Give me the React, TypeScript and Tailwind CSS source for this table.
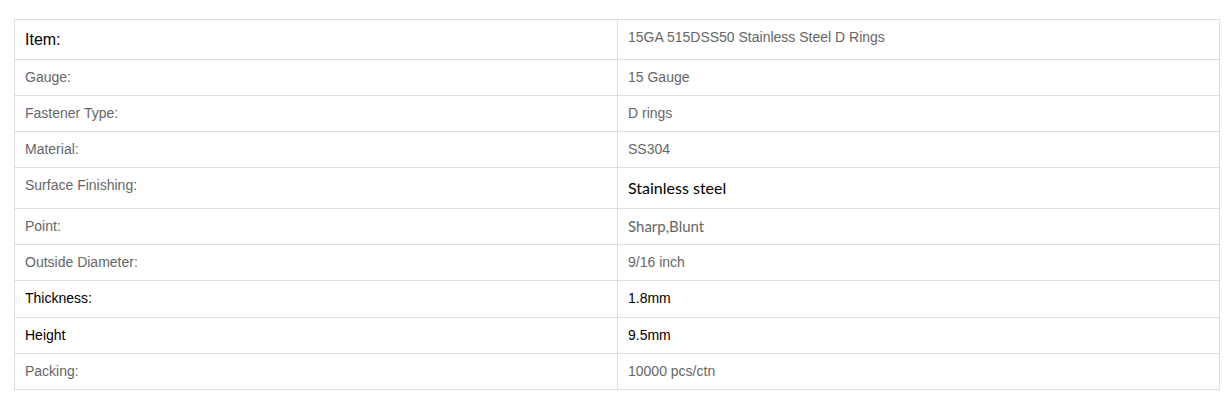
const rows: {
  label: string;
  value: string;
  h: string;
  labelCls?: string;
  valueCls?: string;
}[] = [
  { label: 'Item:', value: '15GA 515DSS50 Stainless Steel D Rings', h: 'h-[40px]', labelCls: 'text-[16px] text-black leading-[23px]' },
  { label: 'Gauge:', value: '15 Gauge', h: 'h-[36px]' },
  { label: 'Fastener Type:', value: 'D rings', h: 'h-[36px]' },
  { label: 'Material:', value: 'SS304', h: 'h-[36px]' },
  {
    label: 'Surface Finishing:',
    value: 'Stainless steel',
    h: 'h-[41px]',
    valueCls: "font-['Lato',sans-serif] text-[16px] text-black leading-[24px]",
  },
  { label: 'Point:', value: 'Sharp,Blunt', h: 'h-[36px]', valueCls: "font-['Lato',sans-serif] text-[15px] leading-[18px]" },
  { label: 'Outside Diameter:', value: '9/16 inch', h: 'h-[36px]' },
  { label: 'Thickness:', value: '1.8mm', h: 'h-[37px]', labelCls: 'text-black', valueCls: 'text-black' },
  { label: 'Height', value: '9.5mm', h: 'h-[36px]', labelCls: 'text-black', valueCls: 'text-black' },
  { label: 'Packing:', value: '10000 pcs/ctn', h: 'h-[36px]' },
];

export default function App() {
  return (
    <div className="min-h-[415px] bg-white pt-[19px] pl-[14px] pr-[11px] font-['Liberation_Sans',Arial,sans-serif]">
      <div className="border-b border-[#dddddd]">
        {rows.map((r) => (
          <div key={r.label} className={`flex border-x border-t border-[#dddddd] ${r.h}`}>
            <div className={`w-[603px] shrink-0 border-r border-[#dddddd] pl-[10px] pt-[8px] text-[14px] leading-[19px] text-[#666666] ${r.labelCls ?? ''}`}>
              {r.label}
            </div>
            <div className={`flex-1 pl-[10px] pt-[8px] text-[14px] leading-[19px] text-[#666666] ${r.valueCls ?? ''}`}>
              {r.value}
            </div>
          </div>
        ))}
      </div>
    </div>
  );
}
